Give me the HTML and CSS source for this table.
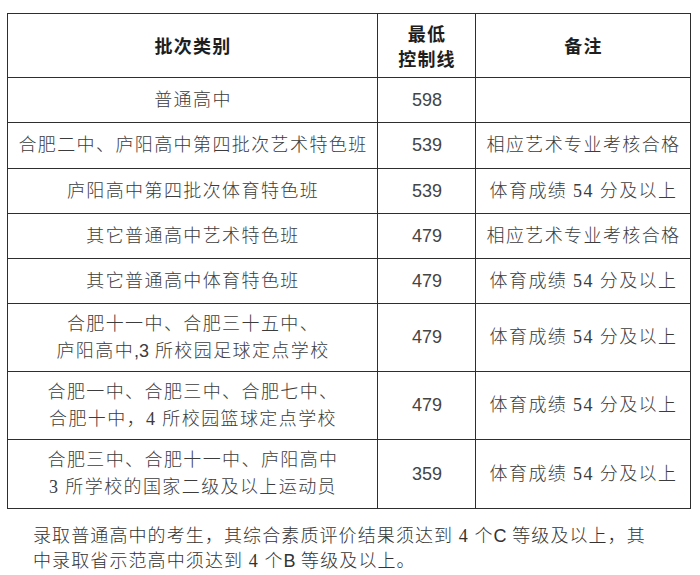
FILE: index.html
```html
<!DOCTYPE html>
<html lang="zh-CN">
<head>
<meta charset="utf-8">
<title>批次类别与最低控制线</title>
<link rel="stylesheet" href="styles.css">
</head>
<body>
<table class="score-table">
  <colgroup>
    <col class="c-type">
    <col class="c-line">
    <col class="c-note">
  </colgroup>
  <thead>
    <tr class="row-head">
      <th>批次类别</th>
      <th class="head-2">最低<br>控制线</th>
      <th>备注</th>
    </tr>
  </thead>
  <tbody>
    <tr class="row-1">
      <td>普通高中</td>
      <td class="num">598</td>
      <td></td>
    </tr>
    <tr class="row-1 tall">
      <td>合肥二中、庐阳高中第四批次艺术特色班</td>
      <td class="num">539</td>
      <td>相应艺术专业考核合格</td>
    </tr>
    <tr class="row-1">
      <td>庐阳高中第四批次体育特色班</td>
      <td class="num">539</td>
      <td>体育成绩 54 分及以上</td>
    </tr>
    <tr class="row-1">
      <td>其它普通高中艺术特色班</td>
      <td class="num">479</td>
      <td>相应艺术专业考核合格</td>
    </tr>
    <tr class="row-1">
      <td>其它普通高中体育特色班</td>
      <td class="num">479</td>
      <td>体育成绩 54 分及以上</td>
    </tr>
    <tr class="row-2">
      <td>合肥十一中、合肥三十五中、<br>庐阳高中<span class="sans">,3</span> 所校园足球定点学校</td>
      <td class="num">479</td>
      <td>体育成绩 54 分及以上</td>
    </tr>
    <tr class="row-2">
      <td>合肥一中、合肥三中、合肥七中、<br>合肥十中，4 所校园篮球定点学校</td>
      <td class="num">479</td>
      <td>体育成绩 54 分及以上</td>
    </tr>
    <tr class="row-2 last">
      <td>合肥三中、合肥十一中、庐阳高中<br>3 所学校的国家二级及以上运动员</td>
      <td class="num">359</td>
      <td>体育成绩 54 分及以上</td>
    </tr>
  </tbody>
</table>
<p class="note">录取普通高中的考生，其综合素质评价结果须达到 4 个<span class="sans">C</span> 等级及以上，其中录取省示范高中须达到 4 个<span class="sans">B</span> 等级及以上。</p>
</body>
</html>
```

FILE: styles.css
```css
html, body {
  margin: 0;
  padding: 0;
  background: #ffffff;
}

body {
  font-family: "Liberation Serif", "Noto Sans CJK SC", serif;
  color: #3a3a3a;
  width: 700px;
}

.score-table {
  margin: 13px 0 0 7px;
  width: 683px;
  border-collapse: collapse;
  table-layout: fixed;
  border: 1px solid #2e2e2e;
}

.c-type { width: 370px; }
.c-line { width: 98px; }
.c-note { width: 215px; }

.score-table th,
.score-table td {
  border: 1px solid #2e2e2e;
  padding: 0 0 0 1px;
  text-align: center;
  vertical-align: middle;
  font-size: 18px;
  letter-spacing: 1.4px;
  line-height: 27px;
  font-weight: 300;
  color: #3c3c3c;
  white-space: nowrap;
}

.score-table th {
  font-family: "Noto Sans CJK SC", sans-serif;
  font-weight: 700;
  color: #1e1e1e;
  line-height: 25px;
  letter-spacing: 1.2px;
}

.row-head { height: 64px; }
.row-1 { height: 45px; }
.row-1.tall { height: 46px; }
.row-2 { height: 68px; }
.row-2.last { height: 69px; }

.score-table td.num {
  font-family: "Liberation Sans", "Noto Sans CJK SC", sans-serif;
  letter-spacing: 0;
  font-size: 18px;
  font-weight: 400;
  color: #444444;
}

.sans {
  font-family: "Liberation Sans", sans-serif;
  font-weight: 400;
  letter-spacing: 0;
}

.note {
  margin: 15px 0 0 0;
  padding-left: 33px;
  width: 622px;
  font-size: 18px;
  font-weight: 300;
  letter-spacing: 1.1px;
  line-height: 25px;
  color: #333333;
}
```
